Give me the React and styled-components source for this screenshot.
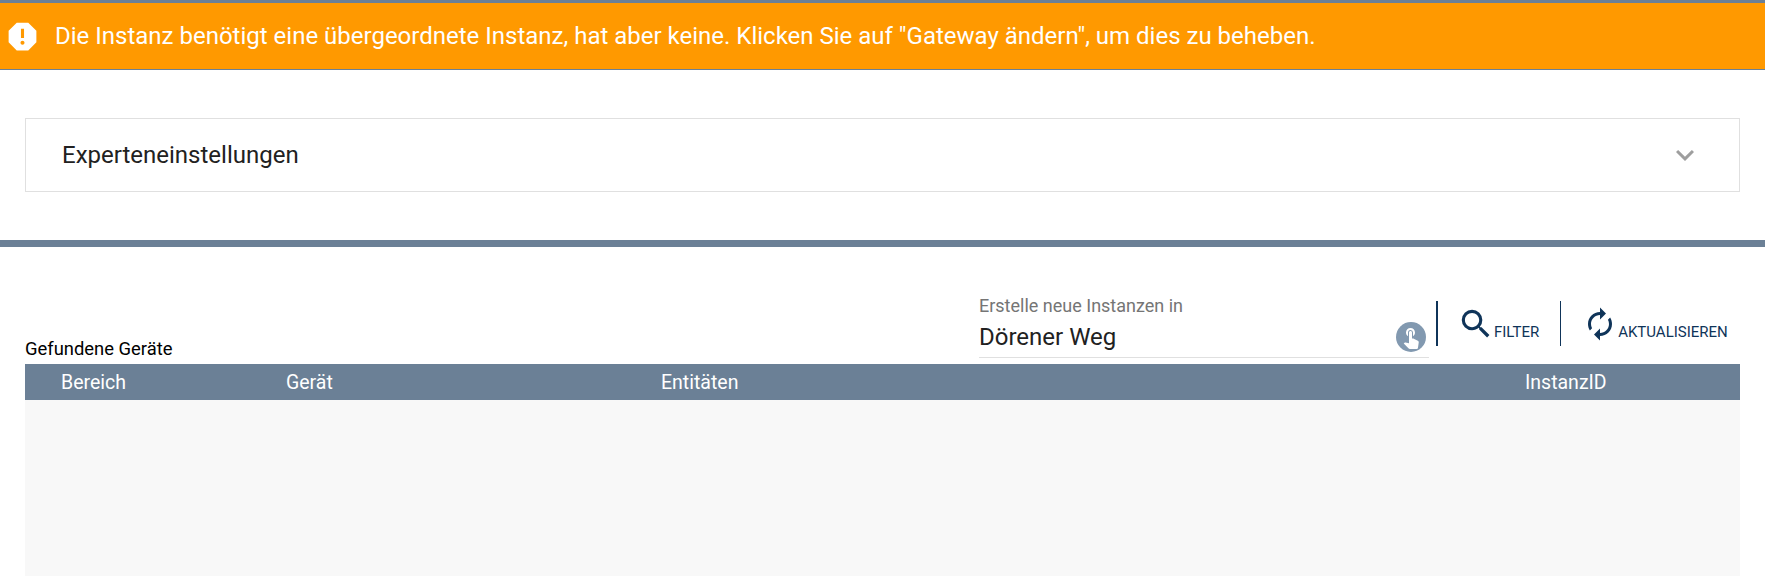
import React from "react";
import styled, { createGlobalStyle } from "styled-components";
import { MdReport, MdSearch, MdAutorenew, MdTouchApp, MdExpandMore } from "react-icons/md";

const GlobalStyle = createGlobalStyle`
  html, body {
    margin: 0;
    padding: 0;
    background: #fff;
    overflow: hidden;
  }
  body {
    font-family: Roboto, "Liberation Sans", sans-serif;
  }
`;

const Page = styled.div`
  width: 1765px;
  height: 576px;
  overflow: hidden;
  background: #fff;
  border-top: 3px solid #6b8096;
  box-sizing: border-box;
`;

const Banner = styled.div`
  height: 67px;
  box-sizing: border-box;
  display: flex;
  align-items: center;
  background: #ff9900;
  border-bottom: 1px solid #6b8096;
  color: #fff;
  font-size: 24px;
  padding-left: 4px;
  gap: 14px;
`;

const BannerIcon = styled(MdReport)`
  width: 37px;
  height: 37px;
  flex: none;
`;

const Panel = styled.div`
  margin: 48px 25px 0;
  height: 74px;
  box-sizing: border-box;
  border: 1px solid #e0e0e0;
  display: flex;
  align-items: center;
  justify-content: space-between;
  padding: 0 36px 0 36px;
  font-size: 24px;
  color: #212121;
`;

const Chevron = styled(MdExpandMore)`
  width: 36px;
  height: 36px;
  color: #9e9e9e;
`;

const Divider = styled.div`
  height: 7px;
  margin-top: 48px;
  background: #6b8096;
`;

const Section = styled.div`
  padding: 0 25px;
`;

const Toolbar = styled.div`
  height: 117px;
  display: flex;
  align-items: flex-end;
`;

const Heading = styled.div`
  font-size: 18.4px;
  color: #000;
  width: 954px;
  flex: none;
  padding-bottom: 5px;
`;

const Field = styled.div`
  width: 450px;
  flex: none;
  height: 68px;
  margin-bottom: 6px;
  box-sizing: border-box;
  border-bottom: 1px solid #e0e0e0;
  display: flex;
  justify-content: space-between;
  align-items: flex-end;
`;

const FieldText = styled.div`
  display: flex;
  flex-direction: column;
`;

const FieldLabel = styled.span`
  font-size: 18px;
  color: #757575;
  line-height: 21px;
`;

const FieldValue = styled.span`
  font-size: 24px;
  color: #212121;
  line-height: 28px;
  margin-top: 7px;
  margin-bottom: 6px;
`;

const TouchBadge = styled.span`
  width: 30px;
  height: 30px;
  border-radius: 50%;
  background: #8299b0;
  color: #fff;
  display: flex;
  align-items: center;
  justify-content: center;
  margin: 0 3px 5px 0;
`;

const ToolButton = styled.div`
  flex: none;
  height: 45px;
  margin-bottom: 18px;
  margin-left: ${(props) => props.$left}px;
  box-sizing: border-box;
  border-left: ${(props) => props.$line}px solid #0f3459;
  padding-left: ${(props) => props.$pad}px;
  display: flex;
  align-items: flex-start;
  color: #0f3459;
  font-size: 15px;
  text-transform: uppercase;
`;

const SearchIcon = styled(MdSearch)`
  width: 38px;
  height: 38px;
  margin-top: 4px;
`;

const RefreshIcon = styled(MdAutorenew)`
  width: 36px;
  height: 36px;
  margin-top: 5px;
`;

const ToolLabel = styled.span`
  margin-top: 22px;
  margin-left: ${(props) => props.$gap}px;
`;

const TableHead = styled.div`
  height: 36px;
  display: grid;
  grid-template-columns: 225px 375px 864px 1fr;
  align-items: center;
  background: #6b8096;
  color: #fff;
  font-size: 19.5px;
  padding-left: 36px;
`;

const TableBody = styled.div`
  height: 176px;
  background: #f8f8f8;
`;

export default function App() {
  return (
    <>
      <GlobalStyle />
      <Page>
        <Banner>
          <BannerIcon />
          Die Instanz benötigt eine übergeordnete Instanz, hat aber keine. Klicken Sie auf "Gateway ändern", um dies zu beheben.
        </Banner>
        <Panel>
          Experteneinstellungen
          <Chevron />
        </Panel>
        <Divider />
        <Section>
          <Toolbar>
            <Heading>Gefundene Geräte</Heading>
            <Field>
              <FieldText>
                <FieldLabel>Erstelle neue Instanzen in</FieldLabel>
                <FieldValue>Dörener Weg</FieldValue>
              </FieldText>
              <TouchBadge>
                <MdTouchApp size={24} />
              </TouchBadge>
            </Field>
            <ToolButton $left={7} $line={2} $pad={19}>
              <SearchIcon />
              <ToolLabel $gap={-1}>Filter</ToolLabel>
            </ToolButton>
            <ToolButton $left={21} $line={1} $pad={21}>
              <RefreshIcon />
              <ToolLabel $gap={0}>Aktualisieren</ToolLabel>
            </ToolButton>
          </Toolbar>
          <TableHead>
            <span>Bereich</span>
            <span>Gerät</span>
            <span>Entitäten</span>
            <span>InstanzID</span>
          </TableHead>
          <TableBody />
        </Section>
      </Page>
    </>
  );
}
